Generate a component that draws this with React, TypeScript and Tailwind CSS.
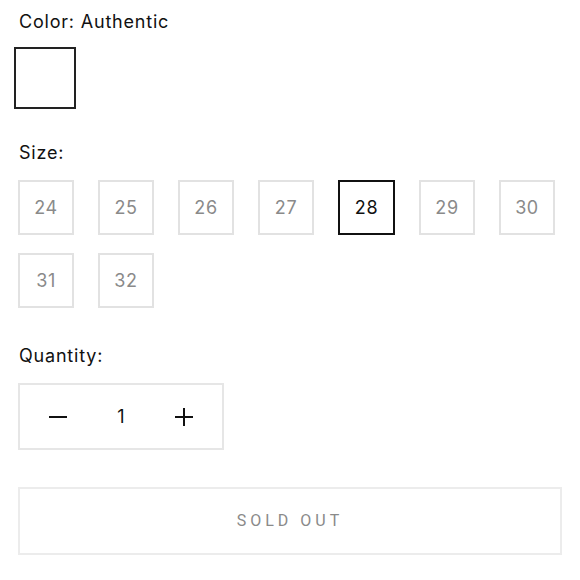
import { useState } from 'react'

const SIZES = ['24', '25', '26', '27', '28', '29', '30', '31', '32']

export default function App() {
  const [size, setSize] = useState('28')
  const [qty, setQty] = useState(1)

  return (
    <div
      className="min-h-[580px] w-[580px] bg-white pl-[18px] pr-[18px] pt-[9px] text-[#111]"
      style={{ fontFamily: 'Inter, "Liberation Sans", sans-serif' }}
    >
      {/* Color */}
      <div className="pl-px text-[18px] leading-[26px] tracking-[0.8px]">Color: Authentic</div>
      <div className="mt-[12px] -ml-[4px] h-[62px] w-[62px] border-2 border-[#222] bg-white" />

      {/* Size */}
      <div className="mt-[31px] pl-px text-[18px] leading-[26px] tracking-[0.8px]">Size:</div>
      <div className="mt-[14px] flex w-[560px] flex-wrap gap-x-[24px] gap-y-[18px]">
        {SIZES.map((s) => {
          const active = s === size
          return (
            <button
              key={s}
              type="button"
              onClick={() => setSize(s)}
              className={
                active
                  ? 'flex h-[55px] w-[57px] items-center justify-center border-2 border-[#111] text-[18px] tracking-[0.6px] text-[#111]'
                  : 'flex h-[55px] w-[56px] items-center justify-center border-2 border-[#e2e2e2] text-[18px] tracking-[0.6px] text-[#8a8a8a]'
              }
            >
              {s}
            </button>
          )
        })}
      </div>

      {/* Quantity */}
      <div className="mt-[35px] pl-px text-[18px] leading-[26px] tracking-[0.8px]">Quantity:</div>
      <div className="mt-[14px] flex h-[67px] w-[206px] items-center border-2 border-[#e6e6e6]">
        <button
          type="button"
          onClick={() => setQty(Math.max(1, qty - 1))}
          className="flex h-full w-[76px] items-center justify-center"
        >
          <svg width="20" height="20" viewBox="0 0 20 20">
            <path d="M1 10h18" stroke="#111" strokeWidth="2" />
          </svg>
        </button>
        <div className="flex-1 text-center text-[18px]">{qty}</div>
        <button
          type="button"
          onClick={() => setQty(qty + 1)}
          className="flex h-full w-[76px] items-center justify-center"
        >
          <svg width="20" height="20" viewBox="0 0 20 20">
            <path d="M1 10h18M10 1v18" stroke="#111" strokeWidth="2" />
          </svg>
        </button>
      </div>

      {/* Sold out */}
      <button
        type="button"
        disabled
        className="mt-[37px] flex h-[68px] w-[544px] items-center justify-center border-2 border-[#ececec] text-[16px] tracking-[4px] text-[#8a8a8a]"
        style={{ fontFamily: 'Roboto, "Liberation Sans", sans-serif' }}
      >
        SOLD OUT
      </button>
    </div>
  )
}
